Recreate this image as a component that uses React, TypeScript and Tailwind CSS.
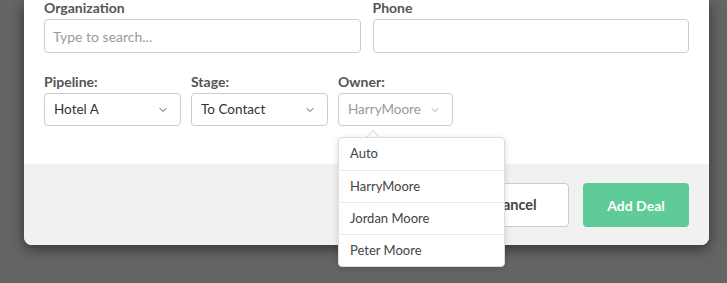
import { ChevronDown } from "lucide-react";

const owners = ["Auto", "HarryMoore", "Jordan Moore", "Peter Moore"];

const Label = ({ children }: { children: React.ReactNode }) => (
  <div className="text-[14px] font-bold text-[#555] leading-4 mb-[3px]">{children}</div>
);

const Select = ({ value, width, muted }: { value: string; width: string; muted?: boolean }) => (
  <div
    className={`${width} h-[33px] border border-[#ccc] rounded bg-white flex items-center justify-between pl-[9px] pr-[11px] text-[13.5px] ${
      muted ? "text-[#9a9a9a]" : "text-[#333]"
    }`}
  >
    <span>{value}</span>
    <ChevronDown size={12} strokeWidth={2} className={muted ? "text-[#aaa]" : "text-[#555]"} />
  </div>
);

export default function App() {
  return (
    <div className="w-[727px] h-[283px] bg-[#656565] overflow-hidden font-['Lato','Liberation_Sans',sans-serif]">
      <div className="ml-6 w-[685px] h-[245px] rounded-b-lg bg-white shadow-[0_4px_14px_rgba(0,0,0,0.5)] flex flex-col">
        <div className="px-5 h-[164px]">
          <div className="flex gap-3">
            <div className="flex-1">
              <Label>Organization</Label>
              <div className="h-[34px] border border-[#ccc] rounded flex items-center px-[8px] text-[14px] text-[#9a9a9a]">
                Type to search...
              </div>
            </div>
            <div className="flex-1">
              <Label>Phone</Label>
              <div className="h-[34px] border border-[#ccc] rounded" />
            </div>
          </div>
          <div className="flex gap-[10px] mt-[21px]">
            <div>
              <Label>Pipeline:</Label>
              <Select value="Hotel A" width="w-[137px]" />
            </div>
            <div>
              <Label>Stage:</Label>
              <Select value="To Contact" width="w-[137px]" />
            </div>
            <div className="relative">
              <Label>Owner:</Label>
              <Select value="HarryMoore" width="w-[115px]" muted />
              <div className="absolute left-0 top-[63px] w-[167px] z-10">
                <div className="absolute -top-[5px] left-[30px] w-[10px] h-[10px] rotate-45 bg-white border-l border-t border-[#ddd]" />
                <ul className="relative bg-white border border-[#ddd] rounded shadow-[0_2px_6px_rgba(0,0,0,0.15)] text-[13px] text-[#444]">
                  {owners.map((o, i) => (
                    <li
                      key={o}
                      className={`h-8 flex items-center px-[11px] ${i > 0 ? "border-t border-[#ebebeb]" : ""}`}
                    >
                      {o}
                    </li>
                  ))}
                </ul>
              </div>
            </div>
          </div>
        </div>
        <div className="flex-1 bg-[#f1f1f1] rounded-b-lg flex justify-end items-start gap-[14px] pt-[19px] pr-5">
          <button className="w-[108px] h-[44px] bg-white border border-[#ccc] rounded text-[14.5px] font-bold text-[#444]">
            Cancel
          </button>
          <button className="w-[106px] h-[44px] bg-[#5fcb98] rounded text-[14px] font-bold text-white">
            Add Deal
          </button>
        </div>
      </div>
    </div>
  );
}
